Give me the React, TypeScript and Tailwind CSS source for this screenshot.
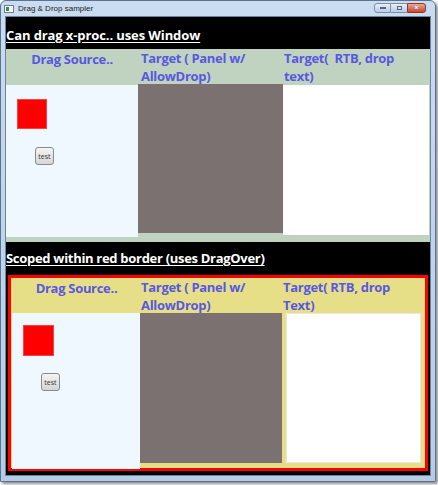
import React from 'react';

const headFont = { fontFamily: '"Open Sans", "Noto Sans", sans-serif' };

function TestButton() {
  return (
    <div className="w-[19px] h-[18px] rounded-[3px] border border-[#8a8a8a] bg-gradient-to-b from-[#f4f4f4] to-[#d6d6d6] flex items-center justify-center text-[7px] leading-none text-[#333]">
      test
    </div>
  );
}

export default function App() {
  return (
    <div className="w-[438px] h-[485px] bg-white" style={headFont}>
      <div className="w-[436px] h-[482px] bg-gradient-to-b from-[#c9dcf0] to-[#b4cde6] border border-[#5b7391] rounded-t-[6px] shadow-[2px_2px_3px_rgba(0,0,0,0.45)] flex flex-col">
        {/* title bar */}
        <div className="h-[16px] flex items-center px-[3px]">
          <div className="w-[10px] h-[8px] bg-white border border-[#6b7f96] flex items-end">
            <div className="w-[3px] h-[4px] bg-[#2e9a3e] ml-[1px] mb-[1px]" />
          </div>
          <span className="ml-[4px] text-[8px] text-[#222]" style={{ fontFamily: '"Liberation Sans", sans-serif' }}>
            Drag &amp; Drop sampler
          </span>
          <div className="ml-auto flex mr-[6px] mt-[-2px]">
            <div className="w-[17px] h-[10px] rounded-l-[3px] border border-[#7a8ea8] bg-gradient-to-b from-[#e6eef8] to-[#b9cce2] flex items-center justify-center">
              <div className="w-[6px] h-[2px] bg-[#55657a]" />
            </div>
            <div className="w-[16px] h-[10px] border-y border-[#7a8ea8] bg-gradient-to-b from-[#e6eef8] to-[#b9cce2] flex items-center justify-center">
              <div className="w-[5px] h-[4px] border border-[#55657a]" />
            </div>
            <div className="w-[19px] h-[10px] rounded-r-[3px] border border-[#8a3a2e] bg-gradient-to-b from-[#e9a597] to-[#c7442d] flex items-center justify-center text-white text-[7px] leading-none font-bold">
              ×
            </div>
          </div>
        </div>

        {/* client area */}
        <div className="mx-[4px] mb-[5px] flex-1 bg-black flex flex-col border border-[#6c84a2]">
          <div className="h-[32px] flex items-end pb-[7px]">
            <span className="text-white font-bold text-[13px] leading-none underline underline-offset-[2px] tracking-[-0.1px]">
              Can drag x-proc.. uses Window
            </span>
          </div>

          <div className="bg-[#c0d2c0] pb-[6px]">
            <div className="grid grid-cols-[132px_145px_1fr] text-[#5858e0] font-bold text-[13px] leading-[18px] tracking-[-0.3px] h-[36px]">
              <div className="text-center pt-[1px]">Drag Source..</div>
              <div className="pl-[3px]">Target ( Panel w/ AllowDrop)</div>
              <div className="pl-[1px] pr-[16px] whitespace-pre-wrap">{'Target(  RTB, drop text)'}</div>
            </div>
            <div className="grid grid-cols-[132px_145px_1fr] h-[151px] items-start">
              <div className="bg-[#f0f8ff] h-[152px] pl-[11px] pt-[14px]">
                <div className="w-[30px] h-[30px] bg-[#ff0000] border border-[#ff4040]" />
                <div className="ml-[18px] mt-[18px]">
                  <TestButton />
                </div>
              </div>
              <div className="bg-[#7b7170] h-[149px] -mt-[1px]" />
              <div className="bg-white h-[150px] mr-[1px]" />
            </div>
          </div>

          <div className="h-[33px] flex items-end pb-[10px]">
            <span className="text-white font-bold text-[13px] leading-none underline underline-offset-[2px] tracking-[-0.3px]">
              Scoped within red border (uses DragOver)
            </span>
          </div>

          <div className="mx-[2px] h-[196px] border-[3px] border-[#ff0000] bg-[#e6df88] flex flex-col">
            <div className="grid grid-cols-[129px_142px_1fr] text-[#5858e0] font-bold text-[13px] leading-[18px] tracking-[-0.3px] h-[35px] pl-[1px]">
              <div className="text-center pt-[1px]">Drag Source..</div>
              <div>Target ( Panel w/ AllowDrop)</div>
              <div className="pr-[20px]">Target( RTB, drop Text)</div>
            </div>
            <div className="flex flex-1 pl-[1px] items-start">
              <div className="bg-[#f0f8ff] w-[128px] h-[156px] pl-[11px] pt-[12px]">
                <div className="w-[31px] h-[31px] bg-[#ff0000] border border-[#ff4040]" />
                <div className="ml-[18px] mt-[17px]">
                  <TestButton />
                </div>
              </div>
              <div className="bg-[#7b7170] w-[142px] h-[150px]" />
              <div className="bg-white w-[135px] h-[150px] ml-[4px] border border-[#e8e8e0]" />
            </div>
          </div>
          <div className="h-[4px]" />
        </div>
      </div>
    </div>
  );
}
